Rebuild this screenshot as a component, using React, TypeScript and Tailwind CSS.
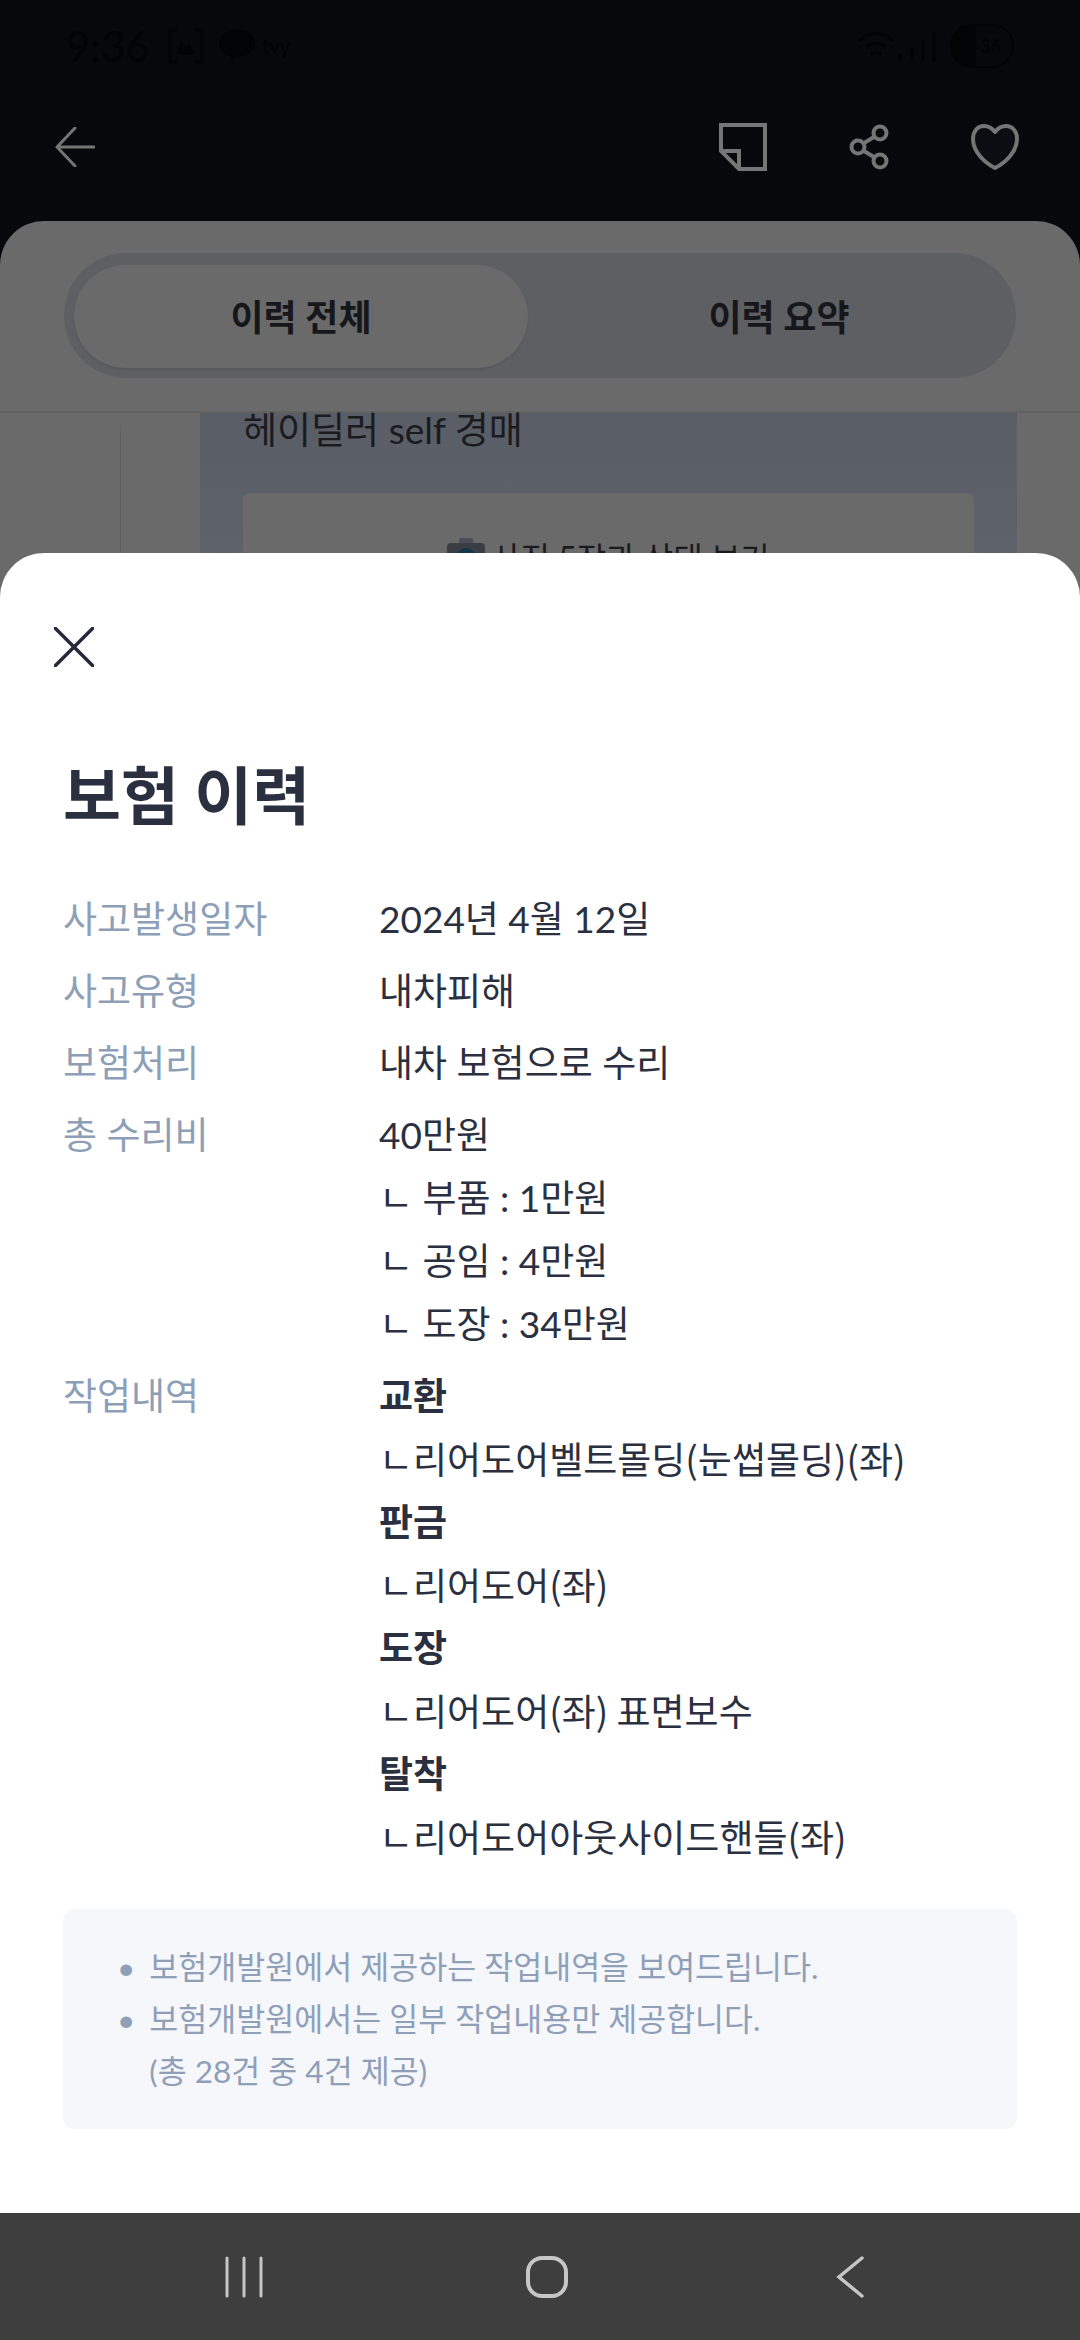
import { useState } from 'react'

const FONT = "font-['Lato','Noto_Sans_CJK_KR',sans-serif]"

const SIMPLE_ROWS = [
  { label: '사고발생일자', value: '2024년 4월 12일' },
  { label: '사고유형', value: '내차피해' },
  { label: '보험처리', value: '내차 보험으로 수리' },
]

const COST_LINES = ['40만원', 'ㄴ 부품 : 1만원', 'ㄴ 공임 : 4만원', 'ㄴ 도장 : 34만원']

const WORK_LINES = [
  { title: '교환', detail: 'ㄴ리어도어벨트몰딩(눈썹몰딩)(좌)' },
  { title: '판금', detail: 'ㄴ리어도어(좌)' },
  { title: '도장', detail: 'ㄴ리어도어(좌) 표면보수' },
  { title: '탈착', detail: 'ㄴ리어도어아웃사이드핸들(좌)' },
]

function StatusBar() {
  return (
    <div className="flex h-[92px] items-center justify-between pl-[66px] pr-[66px] text-[#020304]">
      <div className="flex items-center gap-[14px]">
        <span className="text-[42px] leading-none font-medium">9:36</span>
        <svg width="36" height="36" viewBox="0 0 36 36" fill="none" stroke="currentColor" strokeWidth="3" className="ml-1">
          <path d="M9 2H2v32h7M27 2h7v32h-7" />
          <path d="M10 25l4-9 4 5 3-3 4 7z" fill="currentColor" />
        </svg>
        <svg width="38" height="36" viewBox="0 0 38 36" fill="currentColor">
          <path d="M19 1c10 0 18 6 18 14s-8 14-18 14h-2l-5 6v-7C6 26 1 21 1 15 1 7 9 1 19 1z" />
        </svg>
        <span className="-ml-2 text-[20px] leading-none font-bold">tvy</span>
      </div>
      <div className="flex items-center">
        <svg width="36" height="32" viewBox="0 0 36 32" fill="none" stroke="currentColor" strokeWidth="3">
          <path d="M1 11c10-10 24-10 34 0M7 18c7-6 15-6 22 0M13 25c3-3 7-3 10 0" />
        </svg>
        <svg width="44" height="30" viewBox="0 0 44 30" fill="currentColor">
          <rect x="4" y="22" width="4" height="8" />
          <rect x="16" y="16" width="4" height="14" />
          <rect x="27" y="9" width="4" height="21" />
          <rect x="38" y="1" width="4" height="29" />
        </svg>
        <div className="ml-[12px] flex h-[44px] w-[64px] items-center overflow-hidden rounded-full border-2 border-[#020304]">
          <div className="h-full w-[24px] bg-[#020304]" />
          <span className="ml-1 text-[18px] leading-none font-bold">36</span>
        </div>
      </div>
    </div>
  )
}

function TopBar() {
  return (
    <div className="flex h-[110px] items-center justify-between pl-[55px] pr-[61px] text-[#757575]">
      <svg width="40" height="40" viewBox="0 0 40 40" fill="none" stroke="currentColor" strokeWidth="3" strokeLinecap="round">
        <path d="M20 1L2 20l18 19M2 20h37" />
      </svg>
      <div className="flex items-center gap-[82px]">
        <svg width="48" height="48" viewBox="0 0 48 48" fill="none" stroke="currentColor" strokeWidth="4">
          <path d="M2 2h44v44H20L2 28zM2 28h18v18" />
        </svg>
        <svg width="40" height="46" viewBox="0 0 40 46" fill="none" stroke="currentColor" strokeWidth="4">
          <circle cx="31" cy="9" r="6.5" />
          <circle cx="9" cy="23" r="6.5" />
          <circle cx="31" cy="37" r="6.5" />
          <path d="M15 19l10-6M15 27l10 6" />
        </svg>
        <svg width="48" height="46" viewBox="0 0 48 46" fill="#0c0d12" stroke="currentColor" strokeWidth="4" strokeLinejoin="round">
          <path d="M24 8C21 4 17 2 13 2 6 2 2 8 2 15c0 13 12 24 22 29 10-5 22-16 22-29 0-7-4-13-11-13-4 0-8 2-11 6z" />
        </svg>
      </div>
    </div>
  )
}

function CameraGlyph() {
  return (
    <svg width="38" height="34" viewBox="0 0 38 34" className="mr-[6px] mt-[4px] shrink-0">
      <rect x="12" y="0" width="14" height="8" rx="2" fill="#4a4e56" />
      <rect x="0" y="5" width="38" height="29" rx="4" fill="#3a3d44" />
      <circle cx="19" cy="20" r="10" fill="#10384a" />
    </svg>
  )
}

function BackgroundPage({ tab, onTab }: { tab: number; onTab: (i: number) => void }) {
  return (
    <div className="flex h-[2340px] flex-col bg-[#07080b]">
      <StatusBar />
      <TopBar />
      <div className="mt-[19px] flex-1 overflow-hidden rounded-t-[44px] bg-[#6a6a6a]">
        <div className="h-[192px] border-b-2 border-[#626262] px-[64px] pt-[32px]">
          <div className="grid h-[125px] grid-cols-2 gap-[24px] rounded-full bg-[#5e5f63] px-[10px] pt-[12px] pb-[10px]">
            {['이력 전체', '이력 요약'].map((name, i) => (
              <button
                key={name}
                onClick={() => onTab(i)}
                className={`rounded-full text-[36px] font-bold text-[#16171b] ${tab === i ? 'bg-[#6a6a6a] shadow-[0_2px_2px_rgba(0,0,0,0.08)]' : ''}`}
              >
                {name}
              </button>
            ))}
          </div>
        </div>
        <div className="flex">
          <div className="ml-[120px] mt-4 h-[400px] w-px bg-[#606060]" />
          <div className="ml-[79px] h-[400px] w-[817px] bg-gradient-to-b from-[#595d65] to-[#666c78] px-[43px]">
            <p className="text-[37px] leading-[34px] text-[#1a1b1f]">헤이딜러 self 경매</p>
            <div className="mt-[46px] flex h-[200px] justify-center rounded-md bg-[#6a6a6a] pt-[41px] text-[32px] text-[#1a1b1f]">
              <CameraGlyph />
              사진 5장과 상태 보기
            </div>
          </div>
        </div>
      </div>
    </div>
  )
}

function InfoRow({ label, children }: { label: string; children: React.ReactNode }) {
  return (
    <div className="flex">
      <div className="w-[316px] shrink-0 text-[#8d9eb7]">{label}</div>
      <div className="flex-1">{children}</div>
    </div>
  )
}

function InsuranceSheet() {
  return (
    <div className="absolute inset-x-0 top-[553px] h-[1660px] rounded-t-[44px] bg-white px-[63px] pt-[74px] text-[#2a3040]">
      <svg width="40" height="40" viewBox="0 0 40 40" fill="none" stroke="currentColor" strokeWidth="3.5" strokeLinecap="round" className="-ml-[9px] text-[#252a3a]">
        <path d="M1 1l38 38M39 1L1 39" />
      </svg>
      <h1 className="mt-[90px] text-[63px] leading-[76px] font-bold">보험 이력</h1>
      <div className="mt-[54px] flex flex-col gap-[9px] text-[37px] leading-[63px]">
        {SIMPLE_ROWS.map((row) => (
          <InfoRow key={row.label} label={row.label}>
            {row.value}
          </InfoRow>
        ))}
        <InfoRow label="총 수리비">
          {COST_LINES.map((line) => (
            <div key={line}>{line}</div>
          ))}
        </InfoRow>
        <InfoRow label="작업내역">
          {WORK_LINES.map((line) => (
            <div key={line.title}>
              <div className="font-bold">{line.title}</div>
              <div className="font-['Noto_Sans_CJK_KR',sans-serif]">{line.detail}</div>
            </div>
          ))}
        </InfoRow>
      </div>
      <div className="mt-[41px] h-[220px] rounded-xl bg-[#f5f7fb] pt-[32px] pl-[54px] text-[31.5px] leading-[52px] text-[#8f9fb8]">
        <ul className="flex flex-col">
          <li className="flex gap-[14px]">
            <span>•</span>
            <span>보험개발원에서 제공하는 작업내역을 보여드립니다.</span>
          </li>
          <li className="flex gap-[14px]">
            <span>•</span>
            <span>
              보험개발원에서는 일부 작업내용만 제공합니다.
              <br />
              (총 28건 중 4건 제공)
            </span>
          </li>
        </ul>
      </div>
    </div>
  )
}

function NavBar() {
  return (
    <div className="absolute inset-x-0 bottom-0 flex h-[127px] items-center bg-[#3e3e3e] text-[#c6c6c6]">
      <div className="grid w-full grid-cols-3 pl-[92px] pr-[79px]">
        <div className="flex justify-center">
          <svg width="38" height="42" viewBox="0 0 38 42" stroke="currentColor" strokeWidth="3" strokeLinecap="round">
            <path d="M2 2v38M19 2v38M36 2v38" />
          </svg>
        </div>
        <div className="flex justify-center">
          <svg width="42" height="42" viewBox="0 0 42 42" fill="none" stroke="currentColor" strokeWidth="4">
            <rect x="2" y="2" width="38" height="38" rx="14" />
          </svg>
        </div>
        <div className="flex justify-center">
          <svg width="28" height="42" viewBox="0 0 28 42" fill="none" stroke="currentColor" strokeWidth="3.5" strokeLinecap="round">
            <path d="M26 2L3 21l23 19" />
          </svg>
        </div>
      </div>
    </div>
  )
}

export default function App() {
  const [tab, setTab] = useState(0)

  return (
    <div className={`relative h-[2340px] w-[1080px] overflow-hidden ${FONT}`}>
      <BackgroundPage tab={tab} onTab={setTab} />
      <InsuranceSheet />
      <NavBar />
    </div>
  )
}
